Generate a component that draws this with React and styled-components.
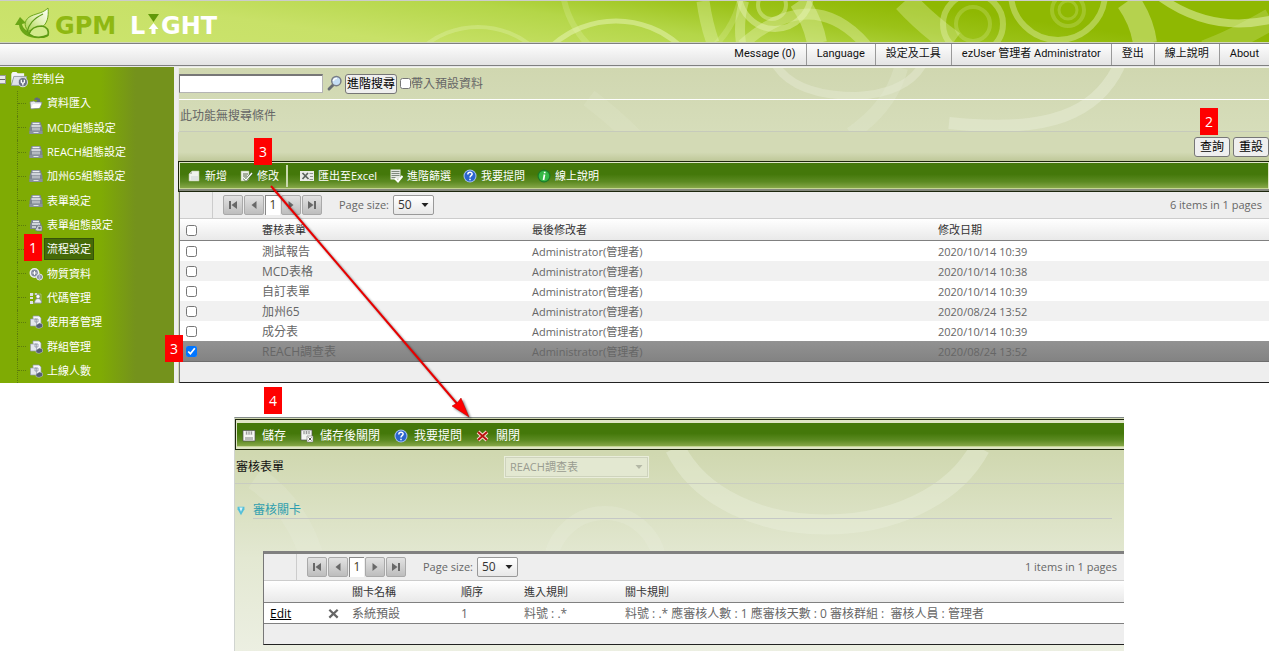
import React from "react"
import styled, { createGlobalStyle, css } from "styled-components"

const sans = `"Open Sans", "Noto Sans CJK TC", sans-serif`
const menuSans = `Roboto, "Noto Sans CJK TC", sans-serif`

const treeItems = [
  { text: "資料匯入", icon: "import" },
  { text: "MCD組態設定", icon: "tray" },
  { text: "REACH組態設定", icon: "tray" },
  { text: "加州65組態設定", icon: "tray" },
  { text: "表單設定", icon: "tray" },
  { text: "表單組態設定", icon: "form" },
  { text: "流程設定", icon: "form", active: true },
  { text: "物質資料", icon: "material" },
  { text: "代碼管理", icon: "code" },
  { text: "使用者管理", icon: "docs" },
  { text: "群組管理", icon: "docs" },
  { text: "上線人數", icon: "docs" },
]

const menuItems = [
  "Message (0)",
  "Language",
  "設定及工具",
  "ezUser 管理者 Administrator",
  "登出",
  "線上說明",
  "About",
]

const forms = [
  { name: "測試報告", date: "2020/10/14 10:39" },
  { name: "MCD表格", date: "2020/10/14 10:38" },
  { name: "自訂表單", date: "2020/10/14 10:39" },
  { name: "加州65", date: "2020/08/24 13:52" },
  { name: "成分表", date: "2020/10/14 10:39" },
  { name: "REACH調查表", date: "2020/08/24 13:52", selected: true },
]

const Icon = ({ name, size = 14 }) => (
  <svg width={size} height={size} viewBox='0 0 14 14' aria-hidden='true'>
    {icons[name]}
  </svg>
)

const icons = {
  root: (
    <>
      <path d='M1 3l1-1.500h3l1 1h5V5H3L1 11z' fill='#f4f5f8' />
      <path d='M3 5h10l-2 7H1z' fill='#dfe2ea' stroke='#8f96a8' strokeWidth='.6' />
      <circle cx='10' cy='9.500' r='3.600' fill='#6c7388' stroke='#d8dbe5' strokeWidth='.8' />
      <path d='M8.800 7.500v2l1.200 1 1.200-1v-2M10 10.500V12' stroke='#fff' fill='none' />
    </>
  ),
  import: (
    <>
      <path d='M1 6l4-1 1 1h5l2 .5L11 12l-9 1z' fill='#e6e8f0' stroke='#858ca0' strokeWidth='.7' />
      <path d='M5 4c1-3 4-3 5-1l1-1v4H7l1.500-1.500C7.500 3.500 6 3.500 5 4z' fill='#606a80' />
      <path d='M4 8h8l-2 4H2z' fill='#fff' />
    </>
  ),
  tray: (
    <>
      <path d='M2.500 1h9L13.500 7v6H.5V7z' fill='#7c8590' />
      <path d='M3.500 2.500h7M2.500 5h9' stroke='#edf0f3' strokeWidth='1.300' />
      <path d='M4 6.500v3M6 6.500v3M8 6.500v3M10 6.500v3' stroke='#edf0f3' strokeWidth='1' />
      <path d='M.5 10h13v3H.5z' fill='#89929c' />
      <path d='M4.500 11.500h5' stroke='#dfe3e7' />
    </>
  ),
  form: (
    <>
      <path d='M2.500 2h8l2 5v4H1V7z' fill='#7c8590' />
      <path d='M4 3.500h6M3 6h8M4 8v2M6 8v2' stroke='#edf0f3' strokeWidth='1.300' />
      <path d='M6 12l3-5 4 1v5H8z' fill='#d0d4da' stroke='#66707c' strokeWidth='.7' />
      <circle cx='10.500' cy='10' r='1.300' fill='#66707c' />
    </>
  ),
  material: (
    <>
      <circle cx='5.500' cy='6' r='4.200' fill='#848b9e' stroke='#eceef4' strokeWidth='1.600' />
      <path d='M3.500 6h4M5.500 4v4' stroke='#fff' />
      <circle cx='10.500' cy='10' r='3' fill='#7c8498' stroke='#eceef4' />
      <path d='M9.500 9h2M9.500 11h2' stroke='#fff' strokeWidth='.9' />
    </>
  ),
  code: (
    <>
      <path d='M1 2h3v3H1zM1 6h3v2H1zM1 10h3v3H1zM6 2h2v2H6z' fill='#dde0e8' />
      <path d='M4 3h8v9H4' fill='none' stroke='#b6bcb0' strokeWidth='.7' />
      <circle cx='9' cy='5.500' r='2' fill='#fff' stroke='#7d8494' strokeWidth='.6' />
      <path d='M5.500 12c0-6 7-6 7 0z' fill='#eef0f5' stroke='#7d8494' strokeWidth='.7' />
    </>
  ),
  docs: (
    <>
      <path d='M4 1h6l2 2v7H4z' fill='#f5f6fa' stroke='#9299aa' strokeWidth='.7' />
      <path d='M1.500 4h6v7h-6z' fill='#e4e7ee' stroke='#9299aa' strokeWidth='.7' />
      <path d='M6 4h3v3H6z' fill='none' stroke='#9097a8' strokeWidth='.8' />
      <path d='M7 10l3.500-2 3 1v3L10 13.500 7 12.500z' fill='#555e75' stroke='#c9cdd8' strokeWidth='.5' />
    </>
  ),
  page: (
    <>
      <path d='M5 2h7v10H2V5z' fill='#f0f2ee' stroke='#b5c3a0' strokeWidth='.6' />
      <path d='M2 5h3V2z' fill='#b9c2b2' />
      <path d='M4 7h7v4H4z' fill='#dfe3e2' />
    </>
  ),
  edit: (
    <>
      <path d='M2 2h8v8l-2 2H2z' fill='#eef0ec' stroke='#9eb080' strokeWidth='.5' />
      <path d='M4 5h5M4 7h4' stroke='#5c6b4c' />
      <path d='M5 9l2 2 6-7' fill='none' stroke='#49663d' strokeWidth='2.600' />
      <path d='M5 9l2 2 6-7' fill='none' stroke='#fff' strokeWidth='1.300' />
    </>
  ),
  excel: (
    <>
      <path d='M0 2h14v10H0z' fill='#e9ebe7' />
      <path d='M2.500 4l6 6M8 4l-5.500 6' stroke='#5b645c' strokeWidth='1.700' />
      <path d='M9.500 4.500H13M10 7.500h3M9.500 10.500H13' stroke='#8e968c' />
    </>
  ),
  filter: (
    <>
      <path d='M1.500.5h10v10h-10z' fill='#e4e7e2' />
      <path d='M2.500 2.500h8M2.500 4.500h8M2.500 6.500h8M2.500 8.500h4' stroke='#737e70' strokeWidth='.9' />
      <path d='M6 9.500l3 3L13.500 7' fill='none' stroke='#fff' strokeWidth='2' />
    </>
  ),
  help: (
    <>
      <circle cx='7' cy='7' r='6.500' fill='#a9c4f2' />
      <circle cx='7' cy='7' r='5.500' fill='#2b65ce' />
      <path d='M4.800 5.400c0-3 4.600-2.800 4.300-.2C8.900 6.800 7 6.600 7 8.500M7 9.700v1.500' fill='none' stroke='#fff' strokeWidth='1.500' />
    </>
  ),
  info: (
    <>
      <circle cx='7' cy='7' r='6.500' fill='#1b7a2a' />
      <circle cx='7' cy='7' r='5.300' fill='#35b846' />
      <path d='M7.700 2.800v1.500M7.500 5.500L6.500 11' stroke='#fff' strokeWidth='1.700' />
    </>
  ),
  save: (
    <>
      <path d='M1 1.500h12v10.500H1z' fill='#f4f5f3' stroke='#555' strokeWidth='.7' />
      <path d='M3.500 2h7v4h-7z' fill='#d9dbd9' />
      <path d='M4.500 2.500v3M7 2.500v3M9.500 2.500v3' stroke='#888' strokeWidth='.8' />
      <path d='M3 8h8v3H3z' fill='#b9bcba' />
    </>
  ),
  saveClose: (
    <>
      <path d='M1 1h11v10H1z' fill='#f4f5f3' stroke='#555' strokeWidth='.7' />
      <path d='M3 1.500h7v4H3z' fill='#d9dbd9' />
      <path d='M4 2v3M6.500 2v3M9 2v3' stroke='#888' strokeWidth='.8' />
      <path d='M7 7h6v6H7z' fill='#fff' stroke='#777' strokeWidth='.6' />
      <path d='M8.500 8.500l3 3m0-3l-3 3' stroke='#555' />
    </>
  ),
  close: (
    <>
      <path d='M2 3l9 8M11 3l-9 8' stroke='#f6d8cd' strokeWidth='4' />
      <path d='M2 3l9 8M11 3l-9 8' stroke='#b8120e' strokeWidth='1.800' />
    </>
  ),
  remove: <path d='M2.500 3l9 8.500m0-8.500l-9 8.500' stroke='#666' strokeWidth='2.400' />,
  search: (
    <>
      <path d='M6 8L2.500 11.500' stroke='#666b72' strokeWidth='2.400' strokeLinecap='round' />
      <circle cx='8.500' cy='5' r='3.800' fill='#c5def5' stroke='#777c86' strokeWidth='1.200' />
      <path d='M6 5c.3-1.500 1.500-2.300 3-2.200' fill='none' stroke='#fff' strokeWidth='1.200' />
    </>
  ),
  first: <path d='M3 3h2v8H3zM11 3v8L5.500 7z' fill='#686868' />,
  prev: <path d='M9.500 3v8L4.500 7z' fill='#686868' />,
  next: <path d='M4.500 3v8l5-4z' fill='#686868' />,
  last: <path d='M9 3h2v8H9zM3 3v8l5.500-4z' fill='#686868' />,
  down: <path d='M3.500 5h7L7 9z' fill='currentColor' />,
  marker: (
    <>
      <path d='M3 2h8v3l-4 7-4-7z' fill='#55bfd8' />
      <path d='M5 3h4L7 8z' fill='#d9f4fa' />
    </>
  ),
}

const Logo = () => (
  <LogoSvg width='230' height='40' viewBox='0 0 230 40' role='img' aria-label='GPM LIGHT'>
    <defs>
      <linearGradient id='leaf' x1='0' y1='1' x2='1' y2='0'>
        <stop offset='0' stopColor='#a5d046' />
        <stop offset='.5' stopColor='#dff0ae' />
        <stop offset='1' stopColor='#fff' />
      </linearGradient>
    </defs>
    <path d='M15 24l5-8 6 6-4 1c1 5 6 9 14 8l13-1c1 5-2 7-7 7-13 1-22-4-23-13z' fill='#6aa616' />
    <path d='M28 30c-5-6-3-12 3-15 7-3 12-3 17-8 1 9-1 16-6 19-5 3-9 3-14 4z' fill='url(#leaf)' stroke='#6fa61d' strokeWidth='1' />
    <path d='M27 31c2-8 6-13 16-18' fill='none' stroke='#5d9a18' strokeWidth='1.200' />
    <path d='M29 33c2-6 8-8 13-8 5 1 7 4 6 9-6 3-14 3-19-1z' fill='#d3ea8b' stroke='#5c9a14' strokeWidth='1.500' />
    <LogoText x='55' y='33' fill='#8fb812'>GPM</LogoText>
    <LogoText x='130' y='33' fill='#fff'>L</LogoText>
    <path d='M148 13h11l-5.500 8z' fill='#619909' />
    <path d='M153.500 22l5 6h-3v5h-4v-5h-3z' fill='#fff' />
    <LogoText x='161' y='33' fill='#fff'>GHT</LogoText>
  </LogoSvg>
)

const BannerSwirls = () => (
  <Swirls viewBox='0 0 1269 41' preserveAspectRatio='xMaxYMin slice' aria-hidden='true'>
    <g fill='none' stroke='#e9f5b8'>
      <circle cx='478' cy='111' r='85' strokeWidth='4' opacity='.3' />
      <circle cx='616' cy='115' r='95' strokeWidth='5' opacity='.5' />
      <circle cx='652' cy='-20' r='90' strokeWidth='6' opacity='.22' />
      <path d='M703 0q3 22 10 42' strokeWidth='13' opacity='.35' />
      <path d='M744 0q-6 22-3 42' strokeWidth='10' opacity='.4' />
      <circle cx='775' cy='-8' r='36' strokeWidth='6' opacity='.45' />
      <circle cx='772' cy='4' r='14' strokeWidth='4' opacity='.4' />
      <path d='M742 44q70-62 124 0' strokeWidth='11' opacity='.38' />
      <path d='M799 0q14 20 18 42' strokeWidth='20' opacity='.4' />
      <path d='M905 0q20 22 48 42' strokeWidth='24' opacity='.32' />
      <circle cx='973' cy='23' r='30' strokeWidth='6' opacity='.38' />
      <circle cx='973' cy='23' r='17' strokeWidth='4' opacity='.22' />
      <circle cx='1058' cy='-8' r='47' strokeWidth='6' opacity='.4' />
      <circle cx='1068' cy='9' r='16' strokeWidth='4' opacity='.22' />
      <circle cx='1068' cy='9' r='9' strokeWidth='3' opacity='.22' />
      <path d='M1128 0q14 20 17 42' strokeWidth='24' opacity='.42' />
      <path d='M1160-4q50 36 110 23' strokeWidth='8' opacity='.5' />
      <path d='M1205 50q28-10 66-32' strokeWidth='22' opacity='.22' />
    </g>
  </Swirls>
)

const SearchSwirls = () => (
  <Swirls viewBox='0 0 1090 64' preserveAspectRatio='xMaxYMin slice' aria-hidden='true'>
    <g fill='none' stroke='#e6ebd4'>
      <path d='M940-2C918 45 870 66 770 55' strokeWidth='12' opacity='.55' />
      <path d='M596-4q20 32 82 32 50-3 66-32' strokeWidth='8' opacity='.45' />
      <path d='M410 30q24 18 46 40' strokeWidth='18' opacity='.2' />
      <path d='M722 0q-10 38-50 66' strokeWidth='14' opacity='.3' />
    </g>
  </Swirls>
)

const EditorSwirls = () => (
  <Swirls viewBox='0 0 890 234' preserveAspectRatio='xMinYMin slice' aria-hidden='true'>
    <g fill='none' stroke='#edf1df'>
      <path d='M440 30C490 132 690 132 745 30' strokeWidth='20' opacity='.38' />
      <path d='M20 60q45 30 60 90' strokeWidth='24' opacity='.2' />
      <circle cx='370' cy='150' r='55' strokeWidth='14' opacity='.25' />
      <circle cx='210' cy='230' r='90' strokeWidth='16' opacity='.25' />
    </g>
  </Swirls>
)

const Pager = ({ total, id }) => (
  <PagerBar>
    <PagerGutter />
    <PagerButtons>
      <PagerButton aria-label='first'><Icon name='first' /></PagerButton>
      <PagerButton aria-label='previous'><Icon name='prev' /></PagerButton>
      <PagerCurrent>1</PagerCurrent>
      <PagerButton aria-label='next'><Icon name='next' /></PagerButton>
      <PagerButton aria-label='last'><Icon name='last' /></PagerButton>
    </PagerButtons>
    <label htmlFor={id}>Page size:</label>
    <SelectBox>
      <PageSelect id={id} defaultValue='50'>
        <option>50</option>
      </PageSelect>
      <Icon name='down' />
    </SelectBox>
    <PagerTotal>{total} items in 1 pages</PagerTotal>
  </PagerBar>
)

const App = () => {
  return (
    <Page>
      <GlobalStyle />
      <Banner>
        <BannerSwirls />
        <Logo />
      </Banner>
      <MenuBar>
        {menuItems.map((item) => (
          <MenuLink href='#' key={item}>{item}</MenuLink>
        ))}
      </MenuBar>

      <Body>
        <Sidebar>
          <TreeRoot>
            <TreeToggle aria-label='collapse' />
            <Icon name='root' size={18} />
            <a href='#'>控制台</a>
          </TreeRoot>
          {treeItems.map((item) => (
            <TreeNode key={item.text}>
              <Icon name={item.icon} />
              <TreeLink href='#' $active={item.active}>{item.text}</TreeLink>
            </TreeNode>
          ))}
        </Sidebar>

        <Content>
          <SearchPanel>
            <SearchSwirls />
            <SearchRow>
              <SearchInput type='text' aria-label='搜尋' />
              <IconButton aria-label='搜尋'><Icon name='search' size={17} /></IconButton>
              <PlainButton $tight>進階搜尋</PlainButton>
              <CheckLabel>
                <Check type='checkbox' />
                帶入預設資料
              </CheckLabel>
            </SearchRow>
            <SearchHint>此功能無搜尋條件</SearchHint>
          </SearchPanel>
          <QueryRow>
            <PlainButton>查詢</PlainButton>
            <PlainButton>重設</PlainButton>
          </QueryRow>

          <Toolbar $shaded>
            <ToolbarInner>
              <ToolButton><Icon name='page' />新增</ToolButton>
              <ToolButton><Icon name='edit' />修改</ToolButton>
              <ToolDivider />
              <ToolButton><Icon name='excel' />匯出至Excel</ToolButton>
              <ToolButton><Icon name='filter' />進階篩選</ToolButton>
              <ToolButton><Icon name='help' />我要提問</ToolButton>
              <ToolButton><Icon name='info' />線上說明</ToolButton>
            </ToolbarInner>
          </Toolbar>

          <Grid>
            <Pager total={6} id='form-page-size' />
            <Table>
              <colgroup>
                <col width='82' />
                <col width='270' />
                <col width='406' />
                <col />
              </colgroup>
              <thead>
                <tr>
                  <th><Check type='checkbox' aria-label='全選' /></th>
                  <th>審核表單</th>
                  <th>最後修改者</th>
                  <th>修改日期</th>
                </tr>
              </thead>
              <tbody>
                {forms.map((form) => (
                  <Row key={form.name} $selected={form.selected}>
                    <td><Check type='checkbox' defaultChecked={form.selected} aria-label={form.name} /></td>
                    <td>{form.name}</td>
                    <SmallCell>Administrator(管理者)</SmallCell>
                    <SmallCell>{form.date}</SmallCell>
                  </Row>
                ))}
              </tbody>
            </Table>
            <GridFooter />
          </Grid>
        </Content>
      </Body>

      <Editor>
        <EditorSwirls />
        <Toolbar>
          <ToolbarInner $large>
            <ToolButton $large><Icon name='save' />儲存</ToolButton>
            <ToolButton $large><Icon name='saveClose' />儲存後關閉</ToolButton>
            <ToolButton $large><Icon name='help' />我要提問</ToolButton>
            <ToolButton $large><Icon name='close' />關閉</ToolButton>
          </ToolbarInner>
        </Toolbar>
        <FormRow>
          <label htmlFor='form-select'>審核表單</label>
          <SelectBox $disabled>
            <FormSelect id='form-select' disabled defaultValue='REACH調查表'>
              <option>REACH調查表</option>
            </FormSelect>
            <Icon name='down' />
          </SelectBox>
        </FormRow>
        <Section>
          <Icon name='marker' size={12} />
          <SectionTitle>審核關卡</SectionTitle>
        </Section>
        <NestedGrid>
          <Pager total={1} id='step-page-size' />
          <Table>
            <colgroup>
              <col width='60' />
              <col width='28' />
              <col width='109' />
              <col width='63' />
              <col width='101' />
              <col />
            </colgroup>
            <thead>
              <tr>
                <th />
                <th />
                <th>關卡名稱</th>
                <th>順序</th>
                <th>進入規則</th>
                <th>關卡規則</th>
              </tr>
            </thead>
            <tbody>
              <Row $last>
                <td><a href='#'>Edit</a></td>
                <td><IconButton aria-label='刪除'><Icon name='remove' size={13} /></IconButton></td>
                <td>系統預設</td>
                <td>1</td>
                <td>料號 : .*</td>
                <td>料號 : .* 應審核人數 : 1 應審核天數 : 0 審核群組 :&nbsp; 審核人員 : 管理者</td>
              </Row>
            </tbody>
          </Table>
          <GridFooter />
        </NestedGrid>
      </Editor>

      <Step $left={24} $top={234}>1</Step>
      <Step $right={51} $top={108}>2</Step>
      <Step $left={254} $top={138}>3</Step>
      <Step $left={165} $top={335}>3</Step>
      <Step $left={264} $top={387}>4</Step>
      <Arrow width='204' height='238' viewBox='0 0 204 238' aria-hidden='true'>
        <path d='M3 2l188 220' stroke='#e80000' strokeWidth='2' />
        <path d='M201 233l-17-11 5-3 4-5z' fill='#f00' stroke='#a00' strokeWidth='.5' />
      </Arrow>
    </Page>
  )
}

export default App

const GlobalStyle = createGlobalStyle`
  * {
    box-sizing: border-box;
  }

  body {
    margin: 0;
    background: #fff;
    font-family: ${sans};
    font-size: 12px;
    line-height: 16px;
    color: #666;
  }

  button,
  input,
  select {
    font-family: inherit;
    font-size: inherit;
    line-height: inherit;
  }

  svg {
    flex: none;
    display: block;
  }
`

const Page = styled.div`
  position: relative;
  overflow: hidden;
`

const Swirls = styled.svg`
  position: absolute;
  inset: 0;
  width: 100%;
  height: 100%;
  pointer-events: none;
`

const LogoSvg = styled.svg`
  position: relative;
`

const LogoText = styled.text`
  font-family: "DejaVu Sans", sans-serif;
  font-size: 24px;
  font-weight: bold;
`

const Banner = styled.header`
  position: relative;
  height: 43px;
  border-top: 1px solid #ccc;
  border-bottom: 1px solid #cfd6bb;
  background: linear-gradient(8deg, #cce46e 0%, #c8e168 26%, #b4d648 48%, #9bc218 64%, #8fb802 76%);
`

const MenuBar = styled.nav`
  display: flex;
  justify-content: flex-end;
  height: 23px;
  border-top: 1px solid #808080;
  border-bottom: 1px solid #808080;
  background: linear-gradient(#fdfdfd, #e4e4e4);
`

const MenuLink = styled.a`
  padding: 2px 10px;
  font-family: ${menuSans};
  font-size: 11px;
  color: #111;
  text-decoration: none;
  border-left: 1px solid #999;

  &:first-child {
    border-left: 0;
  }
`

const Body = styled.div`
  display: flex;
  border-top: 1px solid #e8e8e8;
  background: #eee;
`

const Sidebar = styled.aside`
  display: flex;
  flex-direction: column;
  flex: none;
  width: 174px;
  margin-right: 4px;
  background: linear-gradient(90deg, #7fab04 58%, #74921c 78%);
  font-size: 11px;

  a {
    color: #fff;
    text-decoration: none;
  }
`

const TreeRoot = styled.div`
  display: flex;
  flex: 1;
  align-items: center;
  gap: 4px;
`

const TreeToggle = styled.button`
  width: 6px;
  height: 9px;
  padding: 0;
  border: 1px solid #999;
  border-left: 0;
  background: linear-gradient(#e8e8e8 3px, #666 3px, #666 4px, #e8e8e8 4px);
`

const TreeNode = styled.div`
  display: flex;
  flex: 1;
  align-items: center;
  margin-left: 17px;
  border-left: 1px dotted #5d7d0c;

  &::before {
    content: "";
    width: 8px;
    margin-right: 3px;
    border-top: 1px dotted #5d7d0c;
  }
`

const TreeLink = styled.a`
  margin-left: 1px;
  padding: 2px;
  border: 1px solid transparent;

  ${({ $active }) =>
    $active &&
    css`
      background: #456a08;
      border-color: #36520a;
    `}
`

const Content = styled.main`
  flex: 1;
  min-width: 0;
  background: #d3dab5;
`

const SearchPanel = styled.section`
  position: relative;
  border-top: 1px solid #f4f6ea;
  border-left: 1px solid #e8e8e8;
  background: linear-gradient(#d0d7b0, #d6ddba);
`

const SearchRow = styled.div`
  position: relative;
  display: flex;
  align-items: center;
  height: 32px;
  border-bottom: 1px solid #fff;
`

const SearchInput = styled.input`
  width: 144px;
  height: 19px;
  border: 1px solid #b4b4b4;
  border-top: 2px solid #777;
  border-left: 1px solid #777;
  background: #fff;
`

const IconButton = styled.button`
  display: block;
  padding: 0;
  margin: 0 2px 0 3px;
  border: 0;
  background: none;
`

const PlainButton = styled.button`
  height: 20px;
  padding: ${({ $tight }) => ($tight ? "0 1px" : "0 5px")};
  border: 1px solid #767676;
  border-radius: 3px;
  background: #efefef;
  color: #000;
  line-height: 16px;
  white-space: nowrap;
`

const Check = styled.input`
  display: block;
  width: 11px;
  height: 11px;
  margin: 0;
`

const CheckLabel = styled.label`
  display: flex;
  align-items: center;
  margin-left: 3px;
`

const SearchHint = styled.p`
  position: relative;
  height: 32px;
  margin: 0;
  padding: 8px 1px 0;
  border-bottom: 1px solid #c6cabb;
`

const QueryRow = styled.div`
  display: flex;
  justify-content: flex-end;
  gap: 3px;
  height: 29px;
  padding: 5px 0;
  background: linear-gradient(#d3dab5 70%, #bfc899);
`

const Toolbar = styled.div`
  position: relative;
  padding: 1px 0 2px 1px;
  border: 1px solid #1c260c;
  border-right: 0;
  background: #dfe5c6;

  ${({ $shaded }) =>
    $shaded &&
    css`
      padding-right: 1px;
      box-shadow: inset 0 -2px #84887c;
    `}
`

const ToolbarInner = styled.div`
  display: flex;
  align-items: center;
  gap: ${({ $large }) => ($large ? "14px" : "12px")};
  height: 26px;
  padding: 0 7px;
  border-bottom: 1px solid #c4d594;
  background: linear-gradient(#44780a 45%, #5c8a22 75%, #86a748);

  ${({ $large }) =>
    $large &&
    css`
      height: 24px;
      margin-top: 2px;
      padding: 2px 5px 0;
    `}
`

const ToolButton = styled.button`
  display: flex;
  align-items: center;
  gap: ${({ $large }) => ($large ? "6px" : "4px")};
  padding: 0;
  border: 0;
  background: none;
  color: #fff;
  font-size: ${({ $large }) => ($large ? "12px" : "11px")};
  white-space: nowrap;
`

const ToolDivider = styled.span`
  width: 2px;
  height: 22px;
  margin: 0 0 0 -5px;
  background: #c9d8ae;
`

const Grid = styled.section`
  margin-left: 1px;
  border-left: 1px solid #777;
  border-bottom: 1px solid #222;
  background: #eee;
`

const PagerBar = styled.div`
  display: flex;
  align-items: center;
  height: 27px;
  border-bottom: 1px solid #ccc;
  font-size: 11px;
`

const PagerGutter = styled.span`
  align-self: stretch;
  width: 33px;
  margin-right: 10px;
  border-right: 1px solid #ccc;
`

const PagerButtons = styled.div`
  display: flex;
  gap: 1px;
  margin-right: 17px;
`

const PagerButton = styled.button`
  display: grid;
  place-items: center;
  width: 20px;
  height: 20px;
  padding: 0;
  border: 1px solid #a9a9a9;
  border-radius: 2px;
  background: linear-gradient(#e2e2e2, #bdbdbd);
`

const PagerCurrent = styled.span`
  width: 15px;
  height: 20px;
  padding-top: 1px;
  border-top: 1px solid #888;
  border-left: 1px solid #888;
  background: #fff;
  color: #443b20;
  font-size: 12px;
  text-align: center;
`

const SelectBox = styled.span`
  position: relative;
  margin-left: 4px;
  color: ${({ $disabled }) => ($disabled ? "#b4b8a6" : "#222")};

  svg {
    position: absolute;
    top: 3px;
    right: 2px;
    pointer-events: none;
  }
`

const PageSelect = styled.select`
  appearance: none;
  display: block;
  width: 41px;
  height: 20px;
  padding: 0 4px;
  border: 1px solid #999;
  border-radius: 2px;
  background: linear-gradient(#fff, #e8e8e8);
  color: #333;
  font-size: 12px;
`

const PagerTotal = styled.span`
  margin-left: auto;
  padding-right: 7px;
`

const Table = styled.table`
  width: 100%;
  table-layout: fixed;
  border-collapse: separate;
  border-spacing: 0;

  th,
  td {
    padding: 1px 0 0;
    text-align: left;
    white-space: nowrap;
  }

  th:first-child,
  td:first-child {
    padding-left: 6px;
  }

  th {
    height: 22px;
    border-bottom: 1px solid #808080;
    background: linear-gradient(#fff, #e9e9e9);
    color: #333;
    font-size: 11px;
    font-weight: normal;
  }
`

const Row = styled.tr`
  background: #fff;

  &:nth-child(even) {
    background: #f1f1f1;
  }

  td {
    height: 20px;
  }

  a {
    color: #000;
  }

  ${({ $last }) =>
    $last &&
    css`
      td {
        height: 21px;
        border-bottom: 1px solid #808080;
      }
    `}

  ${({ $selected }) =>
    $selected &&
    css`
      && {
        background: linear-gradient(#929292, #828282);
        color: #666;
      }

      td {
        height: 21px;
        border-bottom: 1px solid #6d6d6d;
      }
    `}
`

const SmallCell = styled.td`
  font-size: 11px;
`

const GridFooter = styled.div`
  height: 20px;
`

const Editor = styled.section`
  position: relative;
  margin: 34px 145px 0 234px;
  border-top: 1px solid #828a8a;
  border-left: 1px solid #d0d4d0;
  background: linear-gradient(#d0d8b0 15%, #e3e8d2 60%, #ecefe2);
  padding: 1px 0 7px;
`

const FormRow = styled.div`
  position: relative;
  display: grid;
  grid-template-columns: 265px auto;
  justify-content: start;
  align-items: center;
  height: 34px;
  padding: 1px 1px 0;
  border-bottom: 1px solid #c8ccc0;
  color: #111;
`

const FormSelect = styled.select`
  appearance: none;
  display: block;
  width: 143px;
  height: 20px;
  padding: 0 4px;
  border: 1px solid #ced3bd;
  outline: 1px solid #e9edda;
  background: #e3e8d1;
  color: #999c90;
  font-size: 11px;
  opacity: 1;
`

const Section = styled.div`
  position: relative;
  display: flex;
  align-items: center;
  gap: 6px;
  margin: 18px 12px 32px 0;
`

const SectionTitle = styled.h2`
  flex: 1;
  margin: 0;
  border-bottom: 1px solid #c5c8c6;
  color: #2f9eae;
  font-size: 12px;
  font-weight: normal;
  line-height: 16px;
`

const NestedGrid = styled.div`
  position: relative;
  margin-left: 28px;
  border-top: 3px solid #808080;
  border-left: 1px solid #777;
  border-bottom: 1px solid #222;
  background: #eee;
`

const Step = styled.span`
  position: absolute;
  top: ${({ $top }) => $top}px;
  left: ${({ $left }) => ($left === undefined ? "auto" : `${$left}px`)};
  right: ${({ $right }) => ($right === undefined ? "auto" : `${$right}px`)};
  width: 18px;
  height: 27px;
  background: #f00;
  color: #fff;
  font-size: 14px;
  line-height: 27px;
  text-align: center;
`

const Arrow = styled.svg`
  position: absolute;
  left: 268px;
  top: 184px;
  pointer-events: none;
  filter: drop-shadow(2px 2px 1px rgba(0, 0, 0, 0.45));
`
